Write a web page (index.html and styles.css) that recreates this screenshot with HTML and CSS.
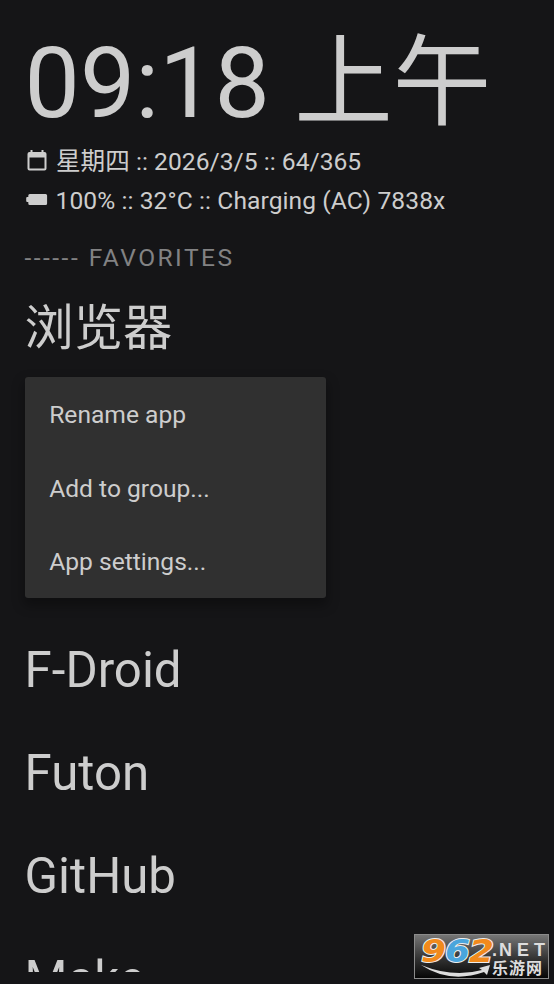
FILE: index.html
```html
<!DOCTYPE html>
<html lang="zh-CN">
<head>
<meta charset="utf-8">
<title>Launcher</title>
<link rel="stylesheet" href="styles.css">
</head>
<body>
<main class="home">
  <header class="status">
    <div class="clock">09:18 上午</div>
    <div class="info date">
      <svg class="icon" viewBox="0 0 22 24"><path fill-rule="evenodd" d="M3.500 0h2v2h9V0h2v2H17.500a2 2 0 0 1 2 2v14.500a2 2 0 0 1-2 2h-15a2 2 0 0 1-2-2V4a2 2 0 0 1 2-2h1zM2.500 7.500v11h15v-11z"/></svg>
      <span>星期四 :: 2026/3/5 :: 64/365</span>
    </div>
    <div class="info battery">
      <svg class="icon" viewBox="0 0 22 24"><path d="M3.800 5h15.800q1.500 0 1.500 1.500v8q0 1.500-1.500 1.500H3.800q-1.500 0-1.500-1.500v-1.500H1.200q-1 0-1-1v-3q0-1 1-1h1.100V6.500Q2.300 5 3.800 5z"/></svg>
      <span>100% :: 32°C :: Charging (AC) 7838x</span>
    </div>
  </header>
  <h2 class="heading">------ FAVORITES</h2>
  <div class="app first">浏览器</div>
  <div class="menu">
    <div class="item">Rename app</div>
    <div class="item">Add to group...</div>
    <div class="item">App settings...</div>
  </div>
  <div class="app">F-Droid</div>
  <div class="app">Futon</div>
  <div class="app">GitHub</div>
  <div class="app">Make</div>
</main>
<div class="badge">
  <svg class="badge-art" viewBox="0 0 135 46">
    <defs>
      <linearGradient id="bg" x1="0" y1="0" x2="0" y2="1"><stop offset="0" stop-color="#777"/><stop offset=".55" stop-color="#333"/><stop offset="1" stop-color="#050505"/></linearGradient>
    </defs>
    <rect x=".5" y=".5" width="134" height="44" fill="url(#bg)" stroke="#8b8b8b"/>
    <path d="M7 31Q39 44 68 36L65 34L76 31L73 41L70 38Q36 50 7 31z" fill="#ddd"/>
    <g class="digits">
      <text x="7" y="27.500" textLength="25" lengthAdjust="spacingAndGlyphs" fill="#f18a1c">9</text>
      <text x="31" y="27.500" textLength="25" lengthAdjust="spacingAndGlyphs" fill="#4aa5dc">6</text>
      <text x="55" y="27.500" textLength="25" lengthAdjust="spacingAndGlyphs" fill="#f18a1c">2</text>
    </g>
    <text class="net" x="78" y="21.500">.</text>
    <text class="net" x="85" y="21.500" textLength="46">NET</text>
    <text class="cn" x="78" y="40" textLength="50">乐游网</text>
  </svg>
</div>
</body>
</html>
```
FILE: styles.css
```css
* { box-sizing: border-box; }
body {
  margin: 0;
  height: 984px;
  overflow: hidden;
  background: #151517;
  color: #cdcdcd;
  font: 24.6px/39px Roboto, "Noto Sans CJK SC", sans-serif;
}
.home {
  height: 971.500px;
  padding: 25px 24.600px 0;
  overflow: hidden;
}
.status { height: 195px; }
.clock {
  height: 117px;
  font-size: 98.500px;
  line-height: 117px;
  white-space: nowrap;
}
.info {
  display: flex;
  align-items: center;
  gap: 7.400px;
  height: 39px;
  white-space: nowrap;
}
.date { letter-spacing: .030px; }
.battery { letter-spacing: .080px; }
.icon { width: 22px; height: 24px; margin-left: 2px; fill: #cdcdcd; }
.battery .icon { margin-left: 1.500px; }
.heading {
  margin: 0;
  padding-top: 18px;
  height: 57px;
  font-size: 24.600px;
  font-weight: 400;
  letter-spacing: 2.460px;
  color: #828283;
}
.app { height: 103px; font-size: 49.200px; line-height: 103px; }
.first { height: 100px; }
.menu {
  width: 301.500px;
  height: 221px;
  margin-bottom: 20.700px;
  border-radius: 3px;
  background: #303030;
  box-shadow: 0 6px 12px 2px rgba(0, 0, 0, .3);
}
.item { height: 73.700px; padding-left: 24.600px; line-height: 75px; }
.badge { position: absolute; left: 414px; top: 934px; width: 135px; height: 46px; }
.badge-art { display: block; width: 135px; height: 46px; }
.digits {
  font: italic 700 32px "DejaVu Sans", sans-serif;
  stroke: #eee;
  stroke-width: 2px;
  paint-order: stroke;
}
.net { font: 700 18px "Liberation Sans", sans-serif; fill: #ddd; }
.cn { font: 700 16px "Noto Sans CJK SC", sans-serif; fill: #ddd; }
```
